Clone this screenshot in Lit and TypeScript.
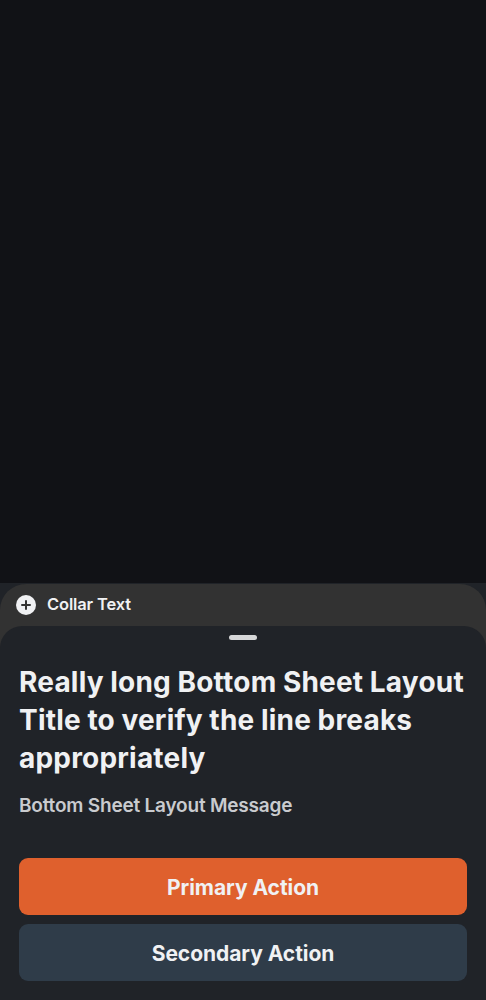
import { LitElement, html, css } from "lit";
import { customElement, property } from "lit/decorators.js";

@customElement("sheet-button")
class SheetButton extends LitElement {
  @property({ reflect: true }) variant = "primary";

  static styles = css`
    :host { display: block; }
    .button {
      display: flex; align-items: center; justify-content: center;
      width: 100%; height: 56.7px; padding: 3px 0 0; border: 0; border-radius: 9px;
      background: #df602d; color: #f0f1f3;
      font: 700 21px/28px Inter, sans-serif; letter-spacing: -0.05px;
    }
    .secondary { padding-top: 2px; background: #2f3c49; }
  `;

  render() {
    return html`<button class="button ${this.variant}"><slot></slot></button>`;
  }
}

@customElement("app-root")
class AppRoot extends LitElement {
  static styles = css`
    :host {
      display: flex; flex-direction: column; justify-content: flex-end;
      height: 1000px; background: #111216; color: #f0f1f3;
      font-family: Inter, sans-serif;
    }
    .sheet { background: #202328; height: 417px; }
    .collar {
      display: flex; align-items: flex-start; box-sizing: border-box;
      height: 68px; margin-top: 0.5px; padding: 11px 16px 0; gap: 11px;
      border-radius: 26px 26px 0 0; background: #323232;
    }
    .icon { width: 20px; height: 20px; display: block; }
    .collar-text { margin-top: -1px; font-size: 16.5px; font-weight: 600; line-height: 20px; letter-spacing: -0.15px; }
    .body {
      box-sizing: border-box; height: 374px; margin-top: -25.5px;
      padding: 9px 19px 0; border-radius: 22px 22px 0 0; background: #202328;
      display: flex; flex-direction: column;
    }
    .handle { width: 28.5px; height: 5px; border-radius: 2.5px; background: #d6d7d8; align-self: center; }
    .title { margin: 23px -10px 0 0; font-size: 28px; font-weight: 700; line-height: 38px; letter-spacing: 0.2px; word-spacing: -0.3px; }
    .message { margin: 16px 0 0; font-size: 19px; font-weight: 600; line-height: 26px; color: #c9cbcf; letter-spacing: -0.2px; }
    .actions { display: flex; flex-direction: column; gap: 9.5px; margin-top: 39px; }
  `;

  render() {
    return html`
      <section class="sheet">
        <div class="collar">
          <svg class="icon" viewBox="0 0 20 20">
            <circle cx="10" cy="10" r="10" fill="#f0f1f3" />
            <path d="M10 6v8M6 10h8" stroke="#323232" stroke-width="2" stroke-linecap="round" />
          </svg>
          <span class="collar-text">Collar Text</span>
        </div>
        <div class="body">
          <div class="handle"></div>
          <h1 class="title">Really long Bottom Sheet Layout<br />Title to verify the line breaks<br />appropriately</h1>
          <p class="message">Bottom Sheet Layout Message</p>
          <div class="actions">
            <sheet-button variant="primary">Primary Action</sheet-button>
            <sheet-button variant="secondary">Secondary Action</sheet-button>
          </div>
        </div>
      </section>
    `;
  }
}
